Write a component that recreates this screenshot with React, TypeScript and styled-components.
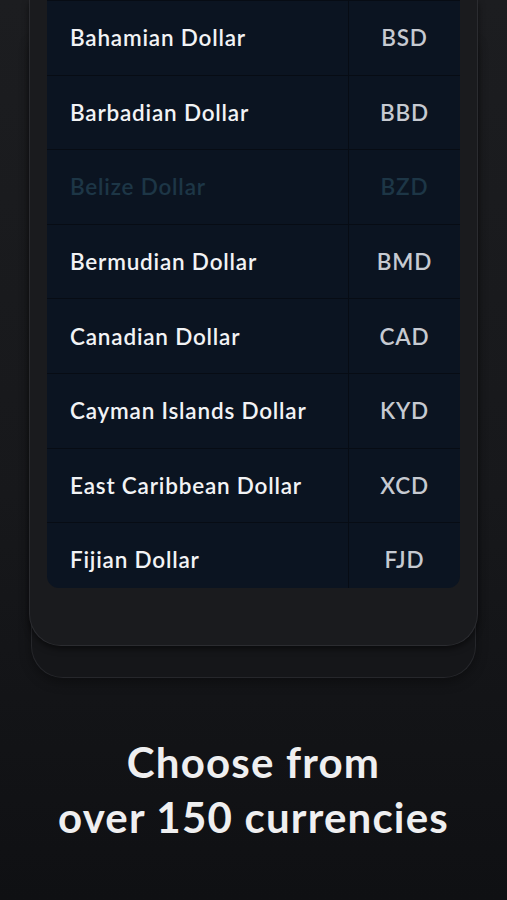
import React, { FC } from 'react'
import styled, { createGlobalStyle } from 'styled-components'

const GlobalStyle = createGlobalStyle`
  html, body {
    margin: 0;
    padding: 0;
    background: #121316;
  }
`

interface Currency {
  name: string
  code: string
  dim?: boolean
}

const currencies: Currency[] = [
  { name: 'Bahamian Dollar', code: 'BSD' },
  { name: 'Barbadian Dollar', code: 'BBD' },
  { name: 'Belize Dollar', code: 'BZD', dim: true },
  { name: 'Bermudian Dollar', code: 'BMD' },
  { name: 'Canadian Dollar', code: 'CAD' },
  { name: 'Cayman Islands Dollar', code: 'KYD' },
  { name: 'East Caribbean Dollar', code: 'XCD' },
  { name: 'Fijian Dollar', code: 'FJD' },
]

const Page = styled.div`
  width: 507px;
  height: 900px;
  overflow: hidden;
  background: linear-gradient(180deg, #1c1d20 0%, #17181b 55%, #0f1013 100%);
  font-family: Lato, 'Noto Sans', sans-serif;
  display: flex;
  flex-direction: column;
  align-items: center;
`

const Stack = styled.div`
  position: relative;
  width: 449px;
  padding-bottom: 32px;

  &::before {
    content: '';
    position: absolute;
    left: 2px;
    right: 2px;
    top: 40px;
    bottom: 0;
    border-radius: 0 0 32px 32px;
    background: #151619;
    border: 1px solid #26272b;
    border-top: none;
    box-shadow: 0 4px 12px rgba(0, 0, 0, 0.35);
  }
`

const Frame = styled.div`
  position: relative;
  z-index: 1;
  background: #1a1b1e;
  border: 1px solid #2b2c30;
  border-top: none;
  border-radius: 0 0 32px 32px;
  padding: 0 17px 57px;
  box-shadow: 0 3px 6px rgba(0, 0, 0, 0.5);
`

const Panel = styled.div`
  height: 587px;
  overflow: hidden;
  background: #0b1421;
  border-radius: 0 0 12px 12px;
  border-top: 1px solid #070c14;
`

const Row = styled.div`
  display: grid;
  grid-template-columns: 1fr 112px;
  height: 74.6px;
  box-sizing: border-box;
  border-bottom: 1.5px solid #070c14;
`

const Name = styled.div<{ dim?: boolean }>`
  display: flex;
  align-items: center;
  padding-left: 23px;
  font-size: 22.5px;
  font-weight: 600;
  letter-spacing: 0.8px;
  color: ${({ dim }) => (dim ? '#1d3646' : '#f2f3f5')};
`

const Code = styled.div<{ dim?: boolean }>`
  display: flex;
  align-items: center;
  justify-content: center;
  border-left: 1.5px solid #070c14;
  font-size: 22.5px;
  font-weight: 600;
  letter-spacing: 0.8px;
  color: ${({ dim }) => (dim ? '#1d3646' : '#c6cad1')};
`

const Heading = styled.h1`
  margin: 57px 0 0;
  text-align: center;
  font-size: 42px;
  line-height: 55px;
  font-weight: 700;
  letter-spacing: 1.2px;
  color: #efeff0;
`

const CurrencyRow: FC<{ item: Currency }> = ({ item }) => (
  <Row>
    <Name dim={item.dim}>{item.name}</Name>
    <Code dim={item.dim}>{item.code}</Code>
  </Row>
)

export default function App() {
  return (
    <Page>
      <GlobalStyle />
      <Stack>
        <Frame>
          <Panel>
            {currencies.map((c) => (
              <CurrencyRow key={c.code} item={c} />
            ))}
          </Panel>
        </Frame>
      </Stack>
      <Heading>
        Choose from
        <br />
        over 150 currencies
      </Heading>
    </Page>
  )
}
